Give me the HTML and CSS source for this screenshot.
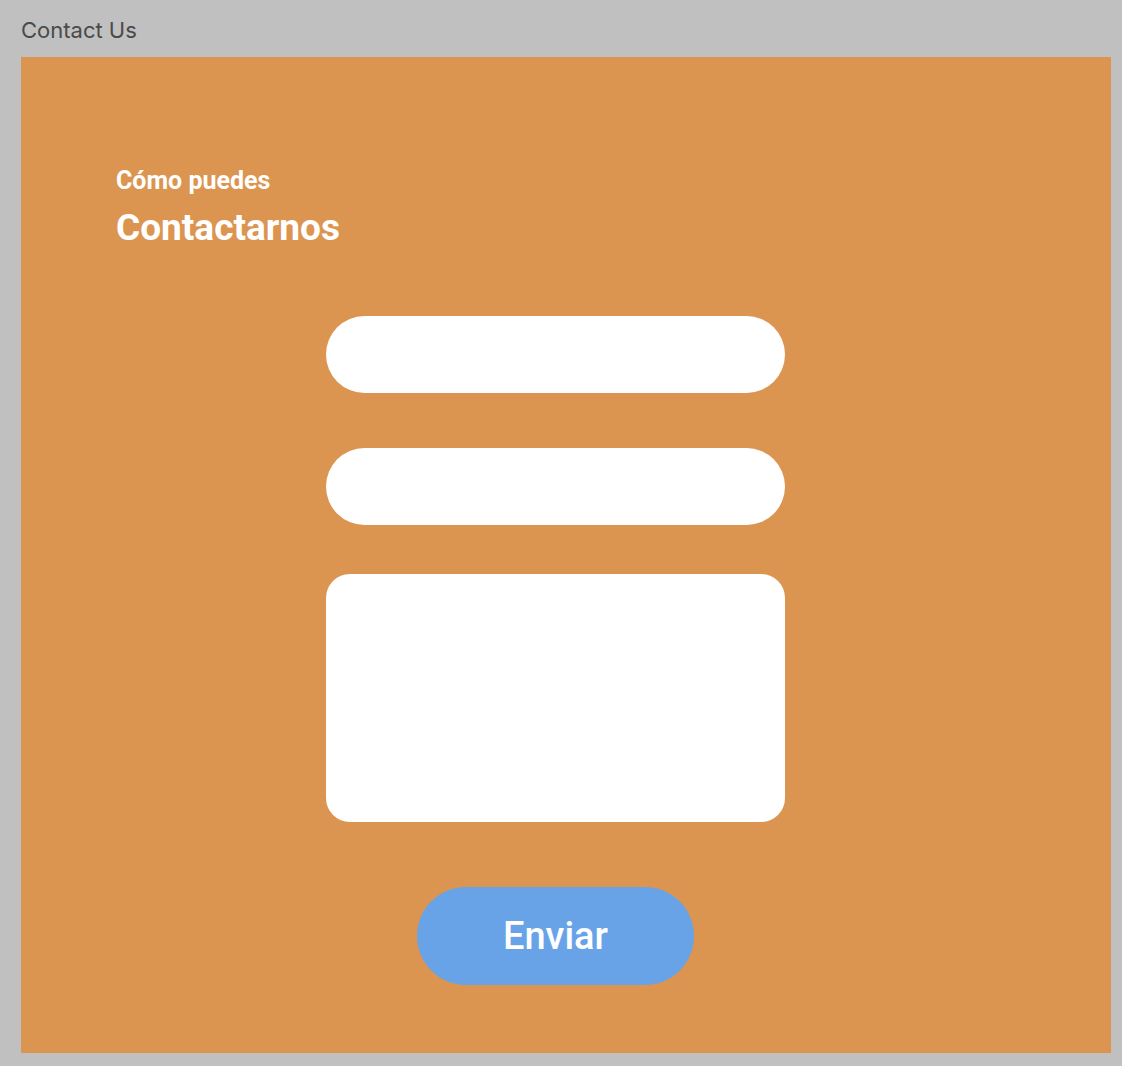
FILE: index.html
```html
<!DOCTYPE html>
<html>
<head>
<meta charset="utf-8">
<link rel="stylesheet" href="styles.css">
</head>
<body>
<div class="page">
  <div class="page-title">Contact Us</div>
  <section class="panel">
    <div class="heading">
      <div class="sub">Cómo puedes</div>
      <div class="main">Contactarnos</div>
    </div>
    <form class="form">
      <div class="field"></div>
      <div class="field"></div>
      <div class="area"></div>
      <button type="button" class="send">Enviar</button>
    </form>
  </section>
</div>
</body>
</html>
```

FILE: styles.css
```css
html, body {
  margin: 0;
  padding: 0;
  background: #c0c0c0;
}
.page {
  width: 1122px;
  height: 1066px;
  padding: 0 11px 0 21px;
  box-sizing: border-box;
}
.page-title {
  font-family: Inter, "Liberation Sans", sans-serif;
  font-size: 22px;
  color: #4a4a4a;
  height: 57px;
  line-height: 60px;
}
.panel {
  background: #db9550;
  height: 996px;
  box-sizing: border-box;
  padding-top: 109px;
  font-family: Roboto, "Liberation Sans", sans-serif;
  color: #fff;
}
.heading {
  padding-left: 95px;
}
.sub {
  font-size: 25px;
  font-weight: 700;
  line-height: 30px;
}
.main {
  font-size: 37px;
  font-weight: 700;
  line-height: 44px;
  margin-top: 10px;
}
.form {
  display: flex;
  flex-direction: column;
  align-items: center;
  margin: 0;
  padding-top: 66px;
  padding-right: 21px;
}
.field, .area {
  width: 459px;
  background: #fff;
}
.field {
  height: 77px;
  border-radius: 39px;
  margin-bottom: 55px;
}
.field + .field {
  margin-bottom: 49px;
}
.area {
  height: 248px;
  border-radius: 24px;
  margin-bottom: 65px;
}
.send {
  width: 277px;
  height: 98px;
  border: none;
  border-radius: 49px;
  background: #68a3e8;
  color: #fff;
  font-family: Roboto, "Liberation Sans", sans-serif;
  font-size: 38px;
  font-weight: 500;
  padding: 0;
}
```
